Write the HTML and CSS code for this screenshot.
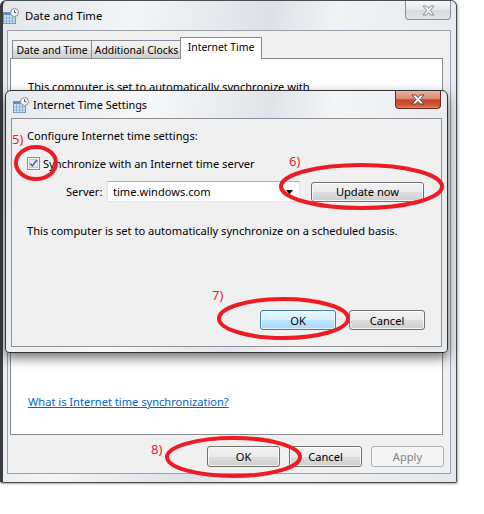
FILE: index.html
```html
<!DOCTYPE html>
<html>
<head>
<meta charset="utf-8">
<link rel="stylesheet" href="styles.css">
</head>
<body>
<div class="win">
  <div class="titlebar">
    <svg class="appicon" width="16" height="16" viewBox="0 0 16 16">
      <rect x="0.5" y="4.5" width="12" height="11" fill="#cfe3f5" stroke="#6f98c4"/>
      <rect x="0.5" y="4.5" width="12" height="2.5" fill="#5b8cc8"/>
      <path d="M3.5 7v8.5M6.5 7v8.5M9.5 7v8.5M0.5 10h12M0.5 13h12" stroke="#8fb3da" stroke-width="1"/>
      <circle cx="11.5" cy="4.5" r="4" fill="#f4f6f8" stroke="#8a9098"/>
      <path d="M11.5 2.2v2.5h1.8" stroke="#555" stroke-width="1" fill="none"/>
    </svg>
    <span class="title">Date and Time</span>
    <div class="capclose">
      <svg width="13" height="11" viewBox="0 0 13 11"><polygon points="1,1 4.5,1 6.5,3.5 8.5,1 12,1 8.3,5.5 12,10 8.5,10 6.5,7.5 4.5,10 1,10 4.7,5.5" fill="#f4f4f4" stroke="#8a8d92" stroke-width="1" stroke-linejoin="round"/></svg>
    </div>
  </div>
  <div class="client">
    <div class="tabs">
      <div class="tab t1">Date and Time</div>
      <div class="tab t2">Additional Clocks</div>
      <div class="tab t3 active">Internet Time</div>
    </div>
    <div class="panel">
      <p class="ptext">This computer is set to automatically synchronize with</p>
      <a class="link" href="#">What is Internet time synchronization?</a>
    </div>
    <div class="btnrow">
      <button class="btn b73">OK</button>
      <button class="btn b73">Cancel</button>
      <button class="btn b73 disabled">Apply</button>
    </div>
  </div>
</div>

<div class="dialog">
  <div class="titlebar dtitle">
    <svg class="appicon" width="16" height="16" viewBox="0 0 16 16">
      <rect x="0.5" y="4.5" width="12" height="11" fill="#cfe3f5" stroke="#6f98c4"/>
      <rect x="0.5" y="4.5" width="12" height="2.5" fill="#5b8cc8"/>
      <path d="M3.5 7v8.5M6.5 7v8.5M9.5 7v8.5M0.5 10h12M0.5 13h12" stroke="#8fb3da" stroke-width="1"/>
      <circle cx="11.5" cy="4.5" r="4" fill="#f4f6f8" stroke="#8a9098"/>
      <path d="M11.5 2.2v2.5h1.8" stroke="#555" stroke-width="1" fill="none"/>
    </svg>
    <span class="title dt">Internet Time Settings</span>
    <div class="capclose red">
      <svg width="14" height="11" viewBox="0 0 14 11"><polygon points="1,1 4.8,1 7,3.6 9.2,1 13,1 9,5.5 13,10 9.2,10 7,7.4 4.8,10 1,10 5,5.5" fill="#ffffff" stroke="#4a4a4a" stroke-width="1" stroke-linejoin="round"/></svg>
    </div>
  </div>
  <div class="dclient">
    <div class="dhead">Configure Internet time settings:</div>
    <div class="chkrow">
      <svg class="chk" width="13" height="13" viewBox="0 0 13 13">
        <rect x="0.5" y="0.5" width="12" height="12" fill="#f4f4f4" stroke="#8e8f8f"/>
        <rect x="2.5" y="2.5" width="8" height="8" fill="#e6e8ea" stroke="#c6cace"/>
        <path d="M3.2 6.4l2.2 2.5L9.8 3" fill="none" stroke="#4a5f97" stroke-width="1.5"/>
      </svg>
      <span>Synchronize with an Internet time server</span>
    </div>
    <div class="srvrow">
      <span class="srvlabel">Server:</span>
      <div class="combo">
        <span>time.windows.com</span>
        <svg width="8" height="5" viewBox="0 0 8 5"><polygon points="0,0 7,0 3.5,4.5" fill="#111"/></svg>
      </div>
      <button class="btn bupd">Update now</button>
    </div>
    <div class="dtext">This computer is set to automatically synchronize on a scheduled basis.</div>
    <div class="dbtns">
      <button class="btn b76 default">OK</button>
      <button class="btn b76">Cancel</button>
    </div>
  </div>
</div>

<svg class="annot" width="484" height="514" viewBox="0 0 484 514">
  <g fill="none" stroke="#ed1c24" stroke-width="4">
    <ellipse cx="36" cy="163" rx="20" ry="16"/>
    <ellipse cx="361.5" cy="186.5" rx="80.5" ry="21.5"/>
    <ellipse cx="283.5" cy="318.5" rx="64.5" ry="19.5"/>
    <ellipse cx="233.5" cy="457" rx="66.5" ry="19"/>
  </g>
  <g class="anum" fill="#ed1c24">
    <text x="12" y="144">5)</text>
    <text x="289" y="166">6)</text>
    <text x="212" y="300">7)</text>
    <text x="151" y="454">8)</text>
  </g>
</svg>
</body>
</html>
```
FILE: styles.css
```css
* { box-sizing: border-box; }
html, body { margin: 0; padding: 0; }
body {
  width: 484px;
  height: 514px;
  background: #ffffff;
  font-family: "Noto Sans", "Liberation Sans", sans-serif;
  font-size: 11.1px;
  color: #000;
  position: relative;
  overflow: hidden;
}

.win {
  width: 457px;
  height: 483px;
  border: 1px solid #4a4d52;
  border-left: 3px solid #3a3d42;
  border-radius: 6px 6px 2px 2px;
  background: linear-gradient(100deg, #e3e7eb 0%, #f3f5f7 25%, #dde1e6 50%, #f0f2f4 62%, #e4e8ec 100%);
  display: flex;
  flex-direction: column;
  box-shadow: 1px 1px 2px rgba(0,0,0,0.35);
}

.titlebar {
  height: 29px;
  display: flex;
  align-items: center;
  padding: 0 5px 0 0;
  flex: none;
}
.appicon { flex: none; margin-right: 6px; }
.title { font-size: 11.3px; color: #000; }
.title.dt { font-size: 10.9px; }

.capclose {
  margin-left: auto;
  align-self: flex-start;
  width: 46px;
  height: 19px;
  border: 1px solid #8a8e95;
  border-top: none;
  border-radius: 0 0 4px 4px;
  background: linear-gradient(#f6f7f8, #e4e7ea 50%, #d6dadf 51%, #e2e5e8);
  display: flex;
  align-items: center;
  justify-content: center;
}
.capclose.red {
  height: 18px;
  width: 46px;
  border-color: #6e2b20;
  background: linear-gradient(#eab1a1, #dc8a74 45%, #c6432a 52%, #d15a3c 85%, #e08a66);
}

.client {
  flex: 1;
  margin: 0 5px 8px 4px;
  border: 1px solid #9aa3ad;
  background: #f0f0f0;
  display: flex;
  flex-direction: column;
  padding: 6px 0 0 2px;
}

.tabs {
  display: flex;
  align-items: flex-end;
  height: 21px;
  padding-left: 2px;
  position: relative;
  z-index: 2;
}
.tab {
  height: 18px;
  border: 1px solid #898c95;
  border-bottom: none;
  background: linear-gradient(#f3f3f3, #ebebeb 50%, #dddddd 51%, #cfcfcf);
  display: flex;
  align-items: center;
  justify-content: center;
  font-size: 10.4px;
  margin-right: -1px;
}
.t1 { width: 80px; }
.t2 { width: 91px; }
.t3 { width: 82px; }
.tab.active {
  height: 22px;
  margin-bottom: -1px;
  margin-left: -1px;
  background: #ffffff;
  align-items: flex-start;
  padding-top: 2px;
}

.panel {
  width: 433px;
  height: 377px;
  background: #ffffff;
  border: 1px solid #898c95;
  display: flex;
  flex-direction: column;
  padding: 20px 0 24px 17px;
  flex: none;
}
.ptext { margin: 0; line-height: 16px; }
.link {
  margin-top: auto;
  line-height: 16px;
  color: #0066cc;
  text-decoration: underline;
}

.btnrow {
  display: flex;
  justify-content: flex-end;
  gap: 9px;
  padding: 11px 6px 0 0;
}

.btn {
  font-family: inherit;
  font-size: 11.1px;
  color: #000;
  height: 21px;
  border: 1px solid #707070;
  border-radius: 3px;
  background: linear-gradient(#f2f2f2, #ebebeb 50%, #dddddd 51%, #cfcfcf);
  box-shadow: inset 0 0 0 1px rgba(255,255,255,0.75);
  padding: 0;
  display: flex;
  align-items: center;
  justify-content: center;
}
.b73 { width: 73px; }
.b76 { width: 76px; height: 20px; }
.bupd { width: 113px; height: 20px; }
.btn.disabled {
  border-color: #adb2b5;
  background: #f4f4f4;
  color: #838383;
  box-shadow: none;
}
.btn.default {
  border-color: #3c7fb1;
  background: linear-gradient(#eaf6fd, #d9f0fc 50%, #bee6fd 51%, #a7d9f5);
  box-shadow: inset 0 0 0 1px rgba(255,255,255,0.6);
}

.dialog {
  position: absolute;
  left: 5px;
  top: 90px;
  width: 443px;
  height: 263px;
  border: 1px solid #2f3236;
  border-radius: 6px 6px 4px 4px;
  background: linear-gradient(100deg, #e6eaee 0%, #f6f8f9 30%, #e0e4e8 55%, #f3f5f7 68%, #e6e9ec 100%);
  box-shadow: 0 5px 12px rgba(0,0,0,0.55);
  display: flex;
  flex-direction: column;
}
.dtitle { height: 27px; padding: 0 6px 0 7px; }
.dtitle .appicon { margin-right: 4px; }

.dclient {
  flex: 1;
  margin: 0 5px 5px 5px;
  border: 1px solid #8e9297;
  background: #f0f0f0;
  padding: 9px 16px 0 15px;
  display: flex;
  flex-direction: column;
}
.dhead { line-height: 16px; }
.chkrow {
  margin-top: 11px;
  height: 16px;
  display: flex;
  align-items: center;
  gap: 3px;
}
.chk { flex: none; }
.srvrow {
  margin-top: 10px;
  display: flex;
  align-items: center;
  height: 21px;
  padding-left: 39px;
}
.srvlabel { width: 41px; }
.combo {
  width: 193px;
  height: 21px;
  background: #ffffff;
  border: 1px solid #e3e5e8;
  border-top-color: #abadb3;
  display: flex;
  align-items: center;
  justify-content: space-between;
  padding: 0 5px 0 5px;
}
.combo svg { margin-top: 2px; }
.bupd { margin-left: 11px; }
.dtext { margin-top: 21px; line-height: 16px; }
.dbtns {
  margin-top: 71px;
  display: flex;
  justify-content: flex-end;
  gap: 13px;
}

.annot {
  position: absolute;
  left: 0;
  top: 0;
  pointer-events: none;
}
.anum text {
  font-family: "Noto Sans", "Liberation Sans", sans-serif;
  font-size: 13px;
}
```
